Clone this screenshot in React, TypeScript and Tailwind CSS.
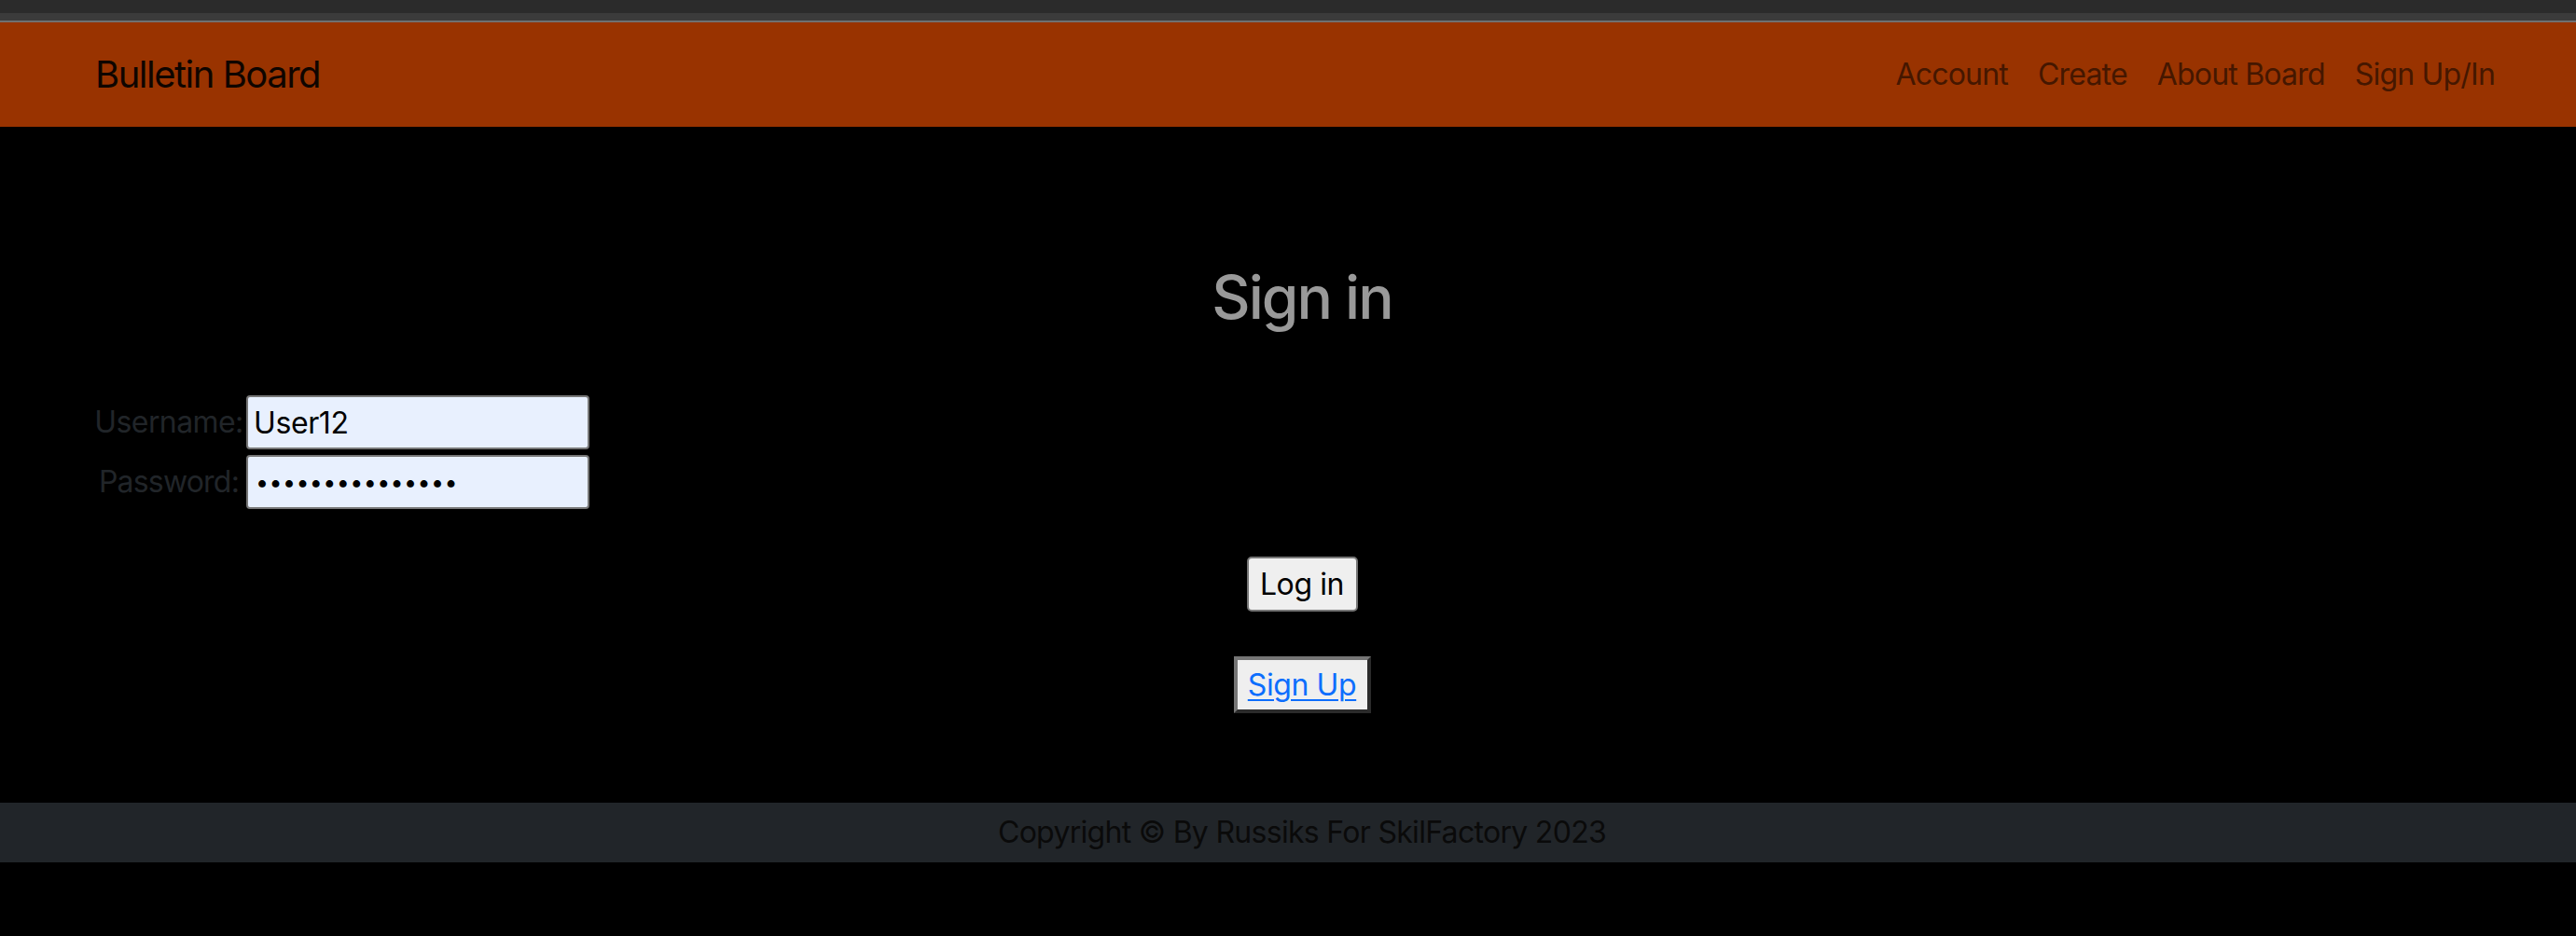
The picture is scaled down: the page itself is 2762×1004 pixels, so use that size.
import React from "react";

const font = { fontFamily: "Inter, 'Noto Sans', sans-serif" };

export default function App() {
  return (
    <div className="w-full min-h-[1004px] bg-black flex flex-col" style={font}>
      <div className="h-[14px] bg-[#2b2b2b]" />
      <div className="h-[8px] bg-[#3b3b3b]" />
      <div className="h-[2px] bg-[#707070]" />
      <nav className="h-[112px] bg-[#993300] flex items-center justify-between pl-[102px] pr-[87px]">
        <div className="text-[40px] leading-[48px] text-[#0f0500] tracking-[-1.5px]">Bulletin Board</div>
        <div className="flex items-center gap-[32px] text-[32px] leading-[40px] text-[#451700] tracking-[-0.8px]">
          <span>Account</span>
          <span>Create</span>
          <span>About Board</span>
          <span>Sign Up/In</span>
        </div>
      </nav>
      <main className="h-[725px] flex flex-col pt-[144px]">
        <h2 className="pl-[30px] flex justify-center text-[64px] leading-[77px] font-medium text-[#999999] tracking-[-2px]">Sign in</h2>
        <div className="mt-[67px] pl-[102px] grid grid-cols-[158px_368px] gap-x-[4px] gap-y-[6px] text-[32px] leading-[40px]">
          <div className="h-[58px] flex items-center justify-center text-[#212529] tracking-[-0.6px]">Username:</div>
          <input
            readOnly
            value="User12"
            className="h-[58px] w-[368px] border-2 border-[#767676] rounded-[4px] bg-[#e8f0fe] px-[6px] text-black outline-none tracking-[-0.4px]"
          />
          <div className="h-[58px] flex items-center justify-center text-[#212529] tracking-[-0.8px]">Password:</div>
          <input
            readOnly
            type="password"
            value="aaaaaaaaaaaaaaa"
            className="h-[58px] w-[368px] border-2 border-[#767676] rounded-[4px] bg-[#e8f0fe] px-[8px] text-black text-[25px] tracking-[0.4px] outline-none"
          />
        </div>
        <div className="mt-[51px] pl-[30px] flex justify-center">
          <button className="w-[119px] h-[59px] border-2 border-[#767676] rounded-[5px] bg-[#efefef] text-black text-[32px] leading-[40px] tracking-[-0.4px]">
            Log in
          </button>
        </div>
        <div className="mt-[48px] pl-[30px] flex justify-center">
          <button className="w-[147px] h-[61px] border-4 border-t-[#767676] border-l-[#767676] border-b-[#2b2b2b] border-r-[#2b2b2b] bg-[#efefef] text-[32px] leading-[40px] tracking-[-0.4px]">
            <a href="#" className="text-[#0d6efd] underline underline-offset-[4px] decoration-2">Sign Up</a>
          </button>
        </div>
      </main>
      <footer className="h-[64px] bg-[#212529] flex items-center justify-center pl-[30px]">
        <span className="text-[32px] leading-[40px] text-[#0a0a0a] tracking-[-0.7px]">Copyright © By Russiks For SkilFactory 2023</span>
      </footer>
    </div>
  );
}
